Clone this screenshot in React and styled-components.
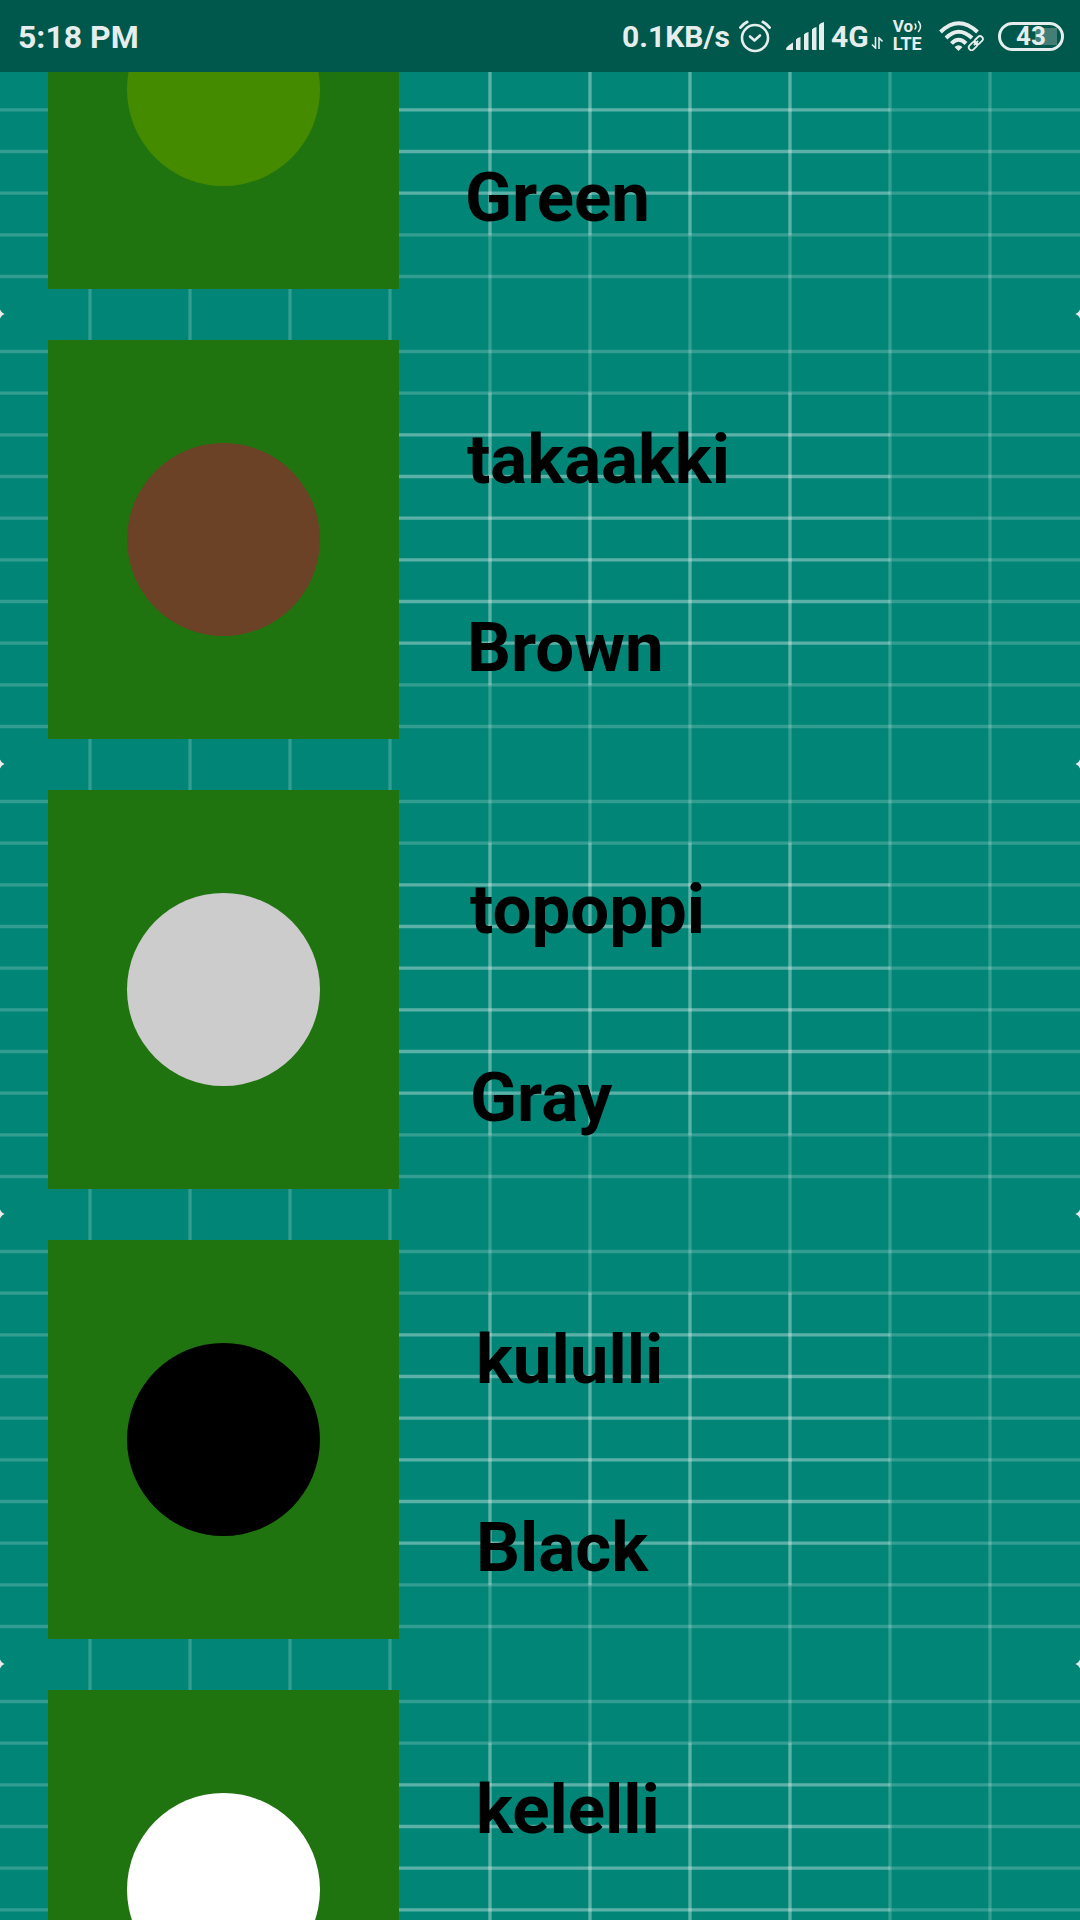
import React from "react";
import styled, { createGlobalStyle } from "styled-components";

const GlobalStyle = createGlobalStyle`
  *, *::before, *::after { box-sizing: border-box; }
  body { margin: 0; background: #008577; font-family: Roboto, sans-serif; }
`;

const Screen = styled.div`
  display: flex;
  flex-direction: column;
  height: 100vh;
  overflow: hidden;
`;

const StatusBar = styled.header`
  display: flex;
  flex: none;
  align-items: center;
  justify-content: space-between;
  height: 72px;
  padding: 0 16px 0 18px;
  background: #00574b;
  color: #e5eeed;
  font-weight: 700;
  font-size: 30px;
  line-height: 36px;
`;

const Indicators = styled.div`
  display: flex;
  align-items: center;
`;

const Clock = styled.span`
  padding-top: 2px;
  font-size: 32px;
`;

const Rate = styled.span`
  margin-right: 8px;
  padding-top: 2px;
`;

const Network = styled.span`
  margin-left: 7px;
  padding-top: 2px;
`;

const Volte = styled.span`
  display: flex;
  flex-direction: column;
  margin: 0 17px 0 10px;
  padding-bottom: 2px;
  font-size: 18px;
  line-height: 17px;
`;

const VoLine = styled.span`
  display: flex;
  align-items: center;
  font-size: 17px;
`;

const Battery = styled.span`
  display: flex;
  align-items: center;
  justify-content: center;
  width: 66px;
  height: 29px;
  margin-left: 14px;
  border: 3px solid #e5eeed;
  border-radius: 15px;
  background: linear-gradient(#437f76, #437f76) 34px center / 22px 17px no-repeat;
  font-size: 26px;
  line-height: 29px;
`;

const Icon = styled.svg`
  display: block;
  flex: none;
`;

const Viewport = styled.main`
  flex: 1;
  min-height: 0;
  overflow: hidden;
`;

const List = styled.ul`
  margin: -208px 0 0;
  padding: 0;
  list-style: none;
`;

const Row = styled.li`
  position: relative;
  display: flex;
  height: 450px;
  padding: 26px 48px 25px;
`;

const Backdrop = styled.svg`
  position: absolute;
  inset: 0;
  width: 100%;
  height: 100%;
`;

const Swatch = styled.div`
  position: relative;
  display: flex;
  flex: none;
  align-items: center;
  justify-content: center;
  width: 351px;
  background: #207410;
`;

const Dot = styled.div`
  width: 193px;
  height: 193px;
  border-radius: 50%;
  background: ${(p) => p.$color};
`;

const Words = styled.div`
  position: relative;
  display: flex;
  flex-direction: column;
  gap: 107px;
  padding: 79px 0 0 ${(p) => p.$indent}px;
  color: #000;
  font-weight: 700;
  font-size: 69px;
  line-height: 81px;
`;

const Word = styled.span`
  display: block;
  height: 81px;
`;

const rows = [
  { english: "Green", color: "#458b00", indent: 66 },
  { name: "takaakki", english: "Brown", color: "#6b4226", indent: 68 },
  { name: "topoppi", english: "Gray", color: "#cccccc", indent: 71 },
  { name: "kululli", english: "Black", color: "#000000", indent: 77 },
  { name: "kelelli", color: "#ffffff", indent: 77 },
];

const outer = [0, 1, 2, 3, 4, 5, 6, 7, 8, 9];
const inner = [2, 3, 4, 5, 6, 7];
const STEP = 125 / 3;

function Grid() {
  const x = (i) => 90 + i * 100;
  const y = (i) => 37.5 + i * STEP;
  return (
    <Backdrop viewBox="0 0 1080 450" preserveAspectRatio="none" aria-hidden="true">
      <g stroke="#ffffff" strokeOpacity="0.2" strokeWidth="3.333">
        {outer.map((i) => (
          <path key={"v" + i} d={`M${x(i)} 0V450`} />
        ))}
        {outer.map((i) => (
          <path key={"h" + i} d={`M0 ${y(i)}H1080`} />
        ))}
        {inner.map((i) => (
          <path key={"iv" + i} d={`M${x(i)} ${y(1)}V${y(8)}`} />
        ))}
        {inner.map((i) => (
          <path key={"ih" + i} d={`M${x(1)} ${y(i)}H${x(8)}`} />
        ))}
      </g>
      <g fill="#ececec">
        <path d="M0 445.5L1.7 448.3L4.5 450H0Z" />
        <path d="M0 0H4.5L1.7 1.7L0 4.5Z" />
        <path d="M1080 445.5L1078.3 448.3L1075.5 450H1080Z" />
        <path d="M1080 0H1075.5L1078.3 1.7L1080 4.5Z" />
      </g>
    </Backdrop>
  );
}

function AlarmIcon() {
  return (
    <Icon width="34" height="34" viewBox="0 0 34 34" fill="none" stroke="#e5eeed" strokeLinecap="round" strokeLinejoin="round" aria-hidden="true">
      <circle cx="17" cy="19" r="13" strokeWidth="2.6" />
      <path d="M12 17.5L16.5 21.5L22 16.5" strokeWidth="2.6" />
      <path d="M2.5 8.5Q5 5 9 3M31.5 8.5Q29 5 25 3" strokeWidth="3" />
    </Icon>
  );
}

function SignalIcon() {
  return (
    <Icon width="38" height="28" viewBox="0 0 38 28" fill="#e5eeed" aria-hidden="true">
      <path d="M0 27Q0 24.5 7 20.5V28H1Q0 28 0 27ZM10 17.5Q11 15.5 14.5 15V28H11Q10 28 10 27ZM18 12.5Q19 10.5 22.5 10V28H19Q18 28 18 27ZM26 7.5Q27 5.5 30.5 5V28H27Q26 28 26 27ZM33 3Q34 1 38 0V28H34Q33 28 33 27Z" />
    </Icon>
  );
}

function DataIcon() {
  return (
    <Icon width="12" height="12" viewBox="0 0 12 12" fill="none" stroke="#e5eeed" strokeWidth="1.6" aria-hidden="true">
      <path d="M4.5 0V11L1 7.5M8 12V1L11.5 4.5" />
    </Icon>
  );
}

function WavesIcon() {
  return (
    <Icon width="9" height="13" viewBox="0 0 9 13" fill="none" stroke="#e5eeed" strokeWidth="1.5" strokeLinecap="round" aria-hidden="true">
      <path d="M2 4Q4 6.5 2 9M5.5 1.5Q9.5 6.5 5.5 11.5" />
    </Icon>
  );
}

function WifiIcon() {
  return (
    <Icon width="45" height="30" viewBox="0 0 45 30" fill="none" stroke="#e5eeed" aria-hidden="true">
      <path d="M1.5 11Q19.5 -6.5 38.5 11" strokeWidth="4" />
      <path d="M7 17Q19.5 4.5 33 17" strokeWidth="4" />
      <path d="M12.5 22.5Q19.5 15 27 22.5" strokeWidth="4" />
      <path d="M15.5 26Q19.5 22.5 23.5 26L19.5 30Z" fill="#e5eeed" stroke="none" />
      <g stroke="#00574b" strokeWidth="5" transform="rotate(-45 37 22)">
        <rect x="28.5" y="19.5" width="9" height="5" rx="2.5" />
      </g>
      <g strokeWidth="1.8" transform="rotate(-45 37 22)">
        <rect x="28" y="19.2" width="9.5" height="5.6" rx="2.8" />
        <rect x="36" y="19.2" width="9.5" height="5.6" rx="2.8" />
        <path d="M34 22H40" />
      </g>
    </Icon>
  );
}

const DataSlot = styled.span`
  display: flex;
  align-self: flex-end;
  padding-bottom: 6px;
  margin-left: 2px;
`;

const SignalSlot = styled.span`
  display: flex;
  margin-left: 14px;
`;

export default function App() {
  return (
    <>
      <GlobalStyle />
      <Screen>
        <StatusBar>
          <Clock>5:18 PM</Clock>
          <Indicators>
            <Rate>0.1KB/s</Rate>
            <AlarmIcon />
            <SignalSlot>
              <SignalIcon />
            </SignalSlot>
            <Network>4G</Network>
            <DataSlot>
              <DataIcon />
            </DataSlot>
            <Volte>
              <VoLine>
                Vo
                <WavesIcon />
              </VoLine>
              <span>LTE</span>
            </Volte>
            <WifiIcon />
            <Battery>43</Battery>
          </Indicators>
        </StatusBar>
        <Viewport>
          <List>
            {rows.map((row) => (
              <Row key={row.color}>
                <Grid />
                <Swatch>
                  <Dot $color={row.color} />
                </Swatch>
                <Words $indent={row.indent}>
                  <Word>{row.name}</Word>
                  <Word>{row.english}</Word>
                </Words>
              </Row>
            ))}
          </List>
        </Viewport>
      </Screen>
    </>
  );
}
